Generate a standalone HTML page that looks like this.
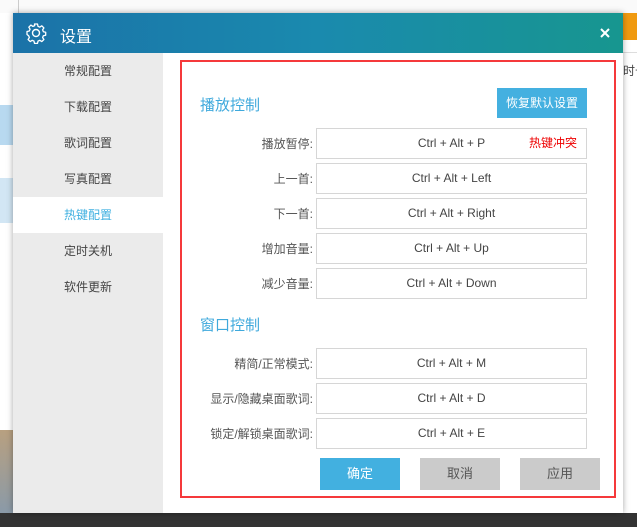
<!DOCTYPE html>
<html><head><meta charset="utf-8"><style>
*{margin:0;padding:0;box-sizing:border-box}
body{width:637px;height:527px;position:relative;overflow:hidden;background:#fff;font-family:"Liberation Sans","Noto Sans CJK SC",sans-serif;font-size:12px;color:#444}
.a{position:absolute}
.side div{position:absolute;left:0;width:150px;height:36px;line-height:36px;padding-left:51px;font-size:12px;color:#444}
.lbl{position:absolute;width:130px;right:0;text-align:right;font-size:12px;color:#555}
.inp{position:absolute;left:316px;width:271px;height:31px;border:1px solid #d6d6d6;background:#fff;text-align:center;line-height:29px;font-size:12px;color:#444}
.btn{position:absolute;top:458px;width:80px;height:32px;line-height:32px;text-align:center;font-size:13px}
</style></head><body>
<div class="a" style="left:0;top:0;width:637px;height:13px;background:#fafafa"></div>
<div class="a" style="left:18px;top:0;width:1px;height:13px;background:#ccc"></div>
<div class="a" style="left:0;top:105px;width:13px;height:40px;background:#b8d9f0"></div>
<div class="a" style="left:0;top:178px;width:13px;height:45px;background:#d2e6f4"></div>
<div class="a" style="left:0;top:430px;width:13px;height:83px;background:linear-gradient(#b8a080,#8a9aa8)"></div>
<div class="a" style="left:623px;top:13px;width:14px;height:27px;background:#f09a10"></div>
<div class="a" style="left:623px;top:62px;font-size:12px;color:#444;white-space:nowrap">时长</div>
<div class="a" style="left:623px;top:52px;width:14px;height:1px;background:#ddd"></div>
<div class="a" style="left:0;top:513px;width:637px;height:14px;background:#333"></div>
<div class="a" style="left:13px;top:13px;width:610px;height:500px;background:#fff;box-shadow:0 0 6px rgba(0,0,0,.35)"></div>
<div class="a" style="left:13px;top:13px;width:610px;height:40px;background:linear-gradient(90deg,#1b72a8,#1a8aae 50%,#17968f)"></div>
<svg class="a" style="left:25px;top:22px" width="22" height="22" viewBox="0 0 22 22"><circle cx="11" cy="11" r="3.5" fill="none" stroke="#fff" stroke-width="1.4"/><path d="M9.5 2h3l.5 2.3 1.8.8 2-1.3 2.1 2.1-1.3 2 .8 1.8 2.3.5v3l-2.3.5-.8 1.8 1.3 2-2.1 2.1-2-1.3-1.8.8-.5 2.3h-3l-.5-2.3-1.8-.8-2 1.3-2.1-2.1 1.3-2-.8-1.8L2 12.5v-3l2.3-.5.8-1.8-1.3-2 2.1-2.1 2 1.3 1.8-.8z" fill="none" stroke="#fff" stroke-width="1.3" stroke-linejoin="round"/></svg>
<div class="a" style="left:60px;top:23px;font-size:16px;color:#fff">设置</div>
<svg class="a" style="left:600px;top:28px" width="10" height="10" viewBox="0 0 10 10"><path d="M1 1L9 9M9 1L1 9" stroke="#fff" stroke-width="2"/></svg>
<div class="a side" style="left:13px;top:53px;width:150px;height:460px;background:#ebebeb">
<div style="top:0">常规配置</div><div style="top:36px">下载配置</div><div style="top:72px">歌词配置</div><div style="top:108px">写真配置</div>
<div style="top:144px;background:#fff;color:#3fb0e0">热键配置</div><div style="top:180px">定时关机</div><div style="top:216px">软件更新</div>
</div>
<div class="a" style="left:180px;top:60px;width:436px;height:438px;border:2px solid #f5393b"></div>
<div class="a" style="left:200px;top:94px;font-size:15px;color:#3fa9dc">播放控制</div>
<div class="a" style="left:497px;top:88px;width:90px;height:30px;line-height:30px;text-align:center;background:#44b0e0;color:#fff;font-size:12px">恢复默认设置</div>
<div class="a" style="left:180px;top:0;width:133px;height:500px">
<div class="lbl" style="top:135px">播放暂停:</div>
<div class="lbl" style="top:170px">上一首:</div>
<div class="lbl" style="top:205px">下一首:</div>
<div class="lbl" style="top:240px">增加音量:</div>
<div class="lbl" style="top:275px">减少音量:</div>
<div class="lbl" style="top:355px">精简/正常模式:</div>
<div class="lbl" style="top:390px">显示/隐藏桌面歌词:</div>
<div class="lbl" style="top:425px">锁定/解锁桌面歌词:</div>
</div>
<div class="inp" style="top:128px">Ctrl + Alt + P<span style="position:absolute;right:9px;color:#e00">热键冲突</span></div>
<div class="inp" style="top:163px">Ctrl + Alt + Left</div>
<div class="inp" style="top:198px">Ctrl + Alt + Right</div>
<div class="inp" style="top:233px">Ctrl + Alt + Up</div>
<div class="inp" style="top:268px">Ctrl + Alt + Down</div>
<div class="a" style="left:200px;top:314px;font-size:15px;color:#3fa9dc">窗口控制</div>
<div class="inp" style="top:348px">Ctrl + Alt + M</div>
<div class="inp" style="top:383px">Ctrl + Alt + D</div>
<div class="inp" style="top:418px">Ctrl + Alt + E</div>
<div class="btn" style="left:320px;background:#42b0e0;color:#fff">确定</div>
<div class="btn" style="left:420px;background:#cbcbcb;color:#555">取消</div>
<div class="btn" style="left:520px;background:#cbcbcb;color:#555">应用</div>
</body></html>
